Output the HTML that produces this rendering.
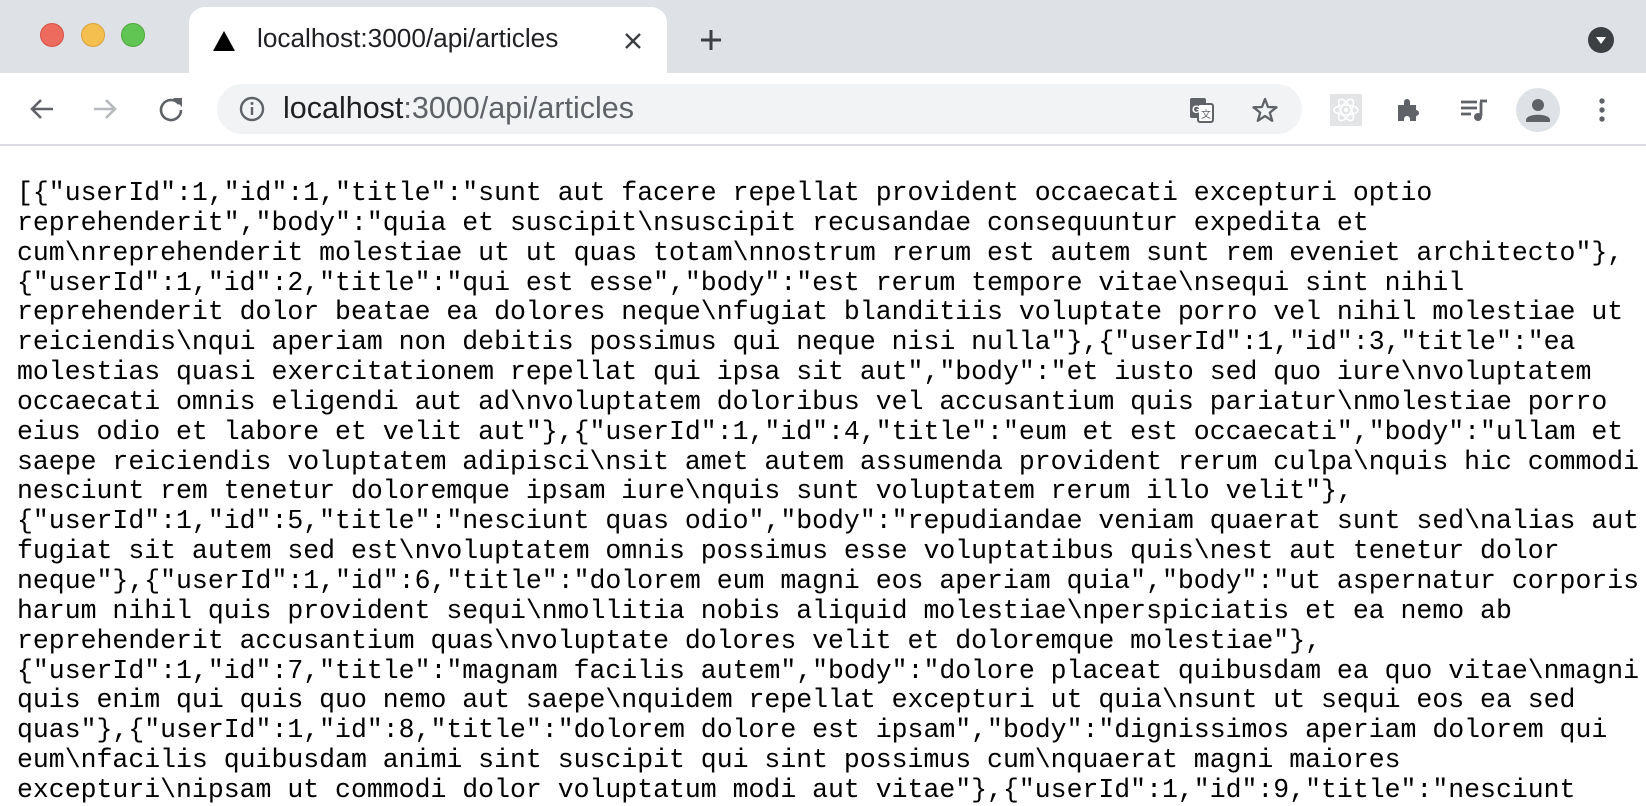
<!DOCTYPE html>
<html><head><meta charset="utf-8"><style>
*{margin:0;padding:0;box-sizing:border-box}
body{width:1646px;height:784px;overflow:hidden;background:#fff;position:relative;font-family:"Liberation Sans",sans-serif}
.tabbar{position:absolute;left:0;top:0;width:1646px;height:73px;background:#dee1e6}
.dot{position:absolute;width:24px;height:24px;border-radius:50%;top:23px}
.tab{position:absolute;left:189px;top:7px;width:478px;height:70px;background:#fff;border-radius:16px 16px 0 0}
.tabtitle{position:absolute;left:257px;top:23px;font-size:26.2px;color:#202124}
.toolbar{position:absolute;left:0;top:73px;width:1646px;height:73px;background:#fff;border-bottom:2px solid #dadce0}
.omni{position:absolute;left:217px;top:84px;width:1085px;height:50px;background:#f1f3f4;border-radius:25px}
.url{position:absolute;left:283px;top:91px;font-size:30.5px;color:#202124}
.url span{color:#5f6368}
pre{position:absolute;left:17px;top:179px;font-family:"Liberation Mono",monospace;font-size:26.5px;line-height:29.85px;color:#000;white-space:pre}
svg{position:absolute}
</style></head><body>
<div class="tabbar"></div>
<div class="dot" style="left:40px;background:#ed6a5e;border:1px solid #d75247"></div>
<div class="dot" style="left:81px;background:#f5bf4f;border:1px solid #d9a23c"></div>
<div class="dot" style="left:121px;background:#61c554;border:1px solid #4ea73f"></div>
<div class="tab"></div>
<svg style="left:212px;top:30px" width="24" height="22" viewBox="0 0 24 22"><path d="M12 1 L23 21 L1 21Z" fill="#000"/></svg>
<div class="tabtitle">localhost:3000/api/articles</div>
<svg style="left:622px;top:30px" width="22" height="22" viewBox="0 0 22 22"><path d="M4 4L18 18M18 4L4 18" stroke="#3c4043" stroke-width="2.4"/></svg>
<svg style="left:698px;top:27px" width="26" height="26" viewBox="0 0 26 26"><path d="M13 3V23M3 13H23" stroke="#3c4043" stroke-width="3"/></svg>
<svg style="left:1588px;top:27px" width="26" height="26" viewBox="0 0 26 26"><circle cx="13" cy="13" r="13" fill="#3c4043"/><path d="M8 10H18L13 17Z" fill="#fff"/></svg>
<div class="toolbar"></div>
<svg style="left:28px;top:95px" width="28" height="28" viewBox="0 0 28 28"><path d="M25 14H5M13 5L4 14L13 23" stroke="#5f6368" stroke-width="2.6" fill="none"/></svg>
<svg style="left:91px;top:95px" width="28" height="28" viewBox="0 0 28 28"><path d="M3 14H23M15 5L24 14L15 23" stroke="#b5b8bc" stroke-width="2.6" fill="none"/></svg>
<svg style="left:157px;top:95px" width="28" height="28" viewBox="0 0 28 28"><path d="M22 9A10 10 0 1 0 24 15" stroke="#5f6368" stroke-width="2.6" fill="none"/><path d="M16 3H25V12Z" fill="#5f6368"/></svg>
<div class="omni"></div>
<svg style="left:239px;top:96px" width="26" height="26" viewBox="0 0 26 26"><circle cx="13" cy="13" r="11" stroke="#5f6368" stroke-width="2.4" fill="none"/><path d="M13 11V19" stroke="#5f6368" stroke-width="2.4"/><circle cx="13" cy="7.5" r="1.5" fill="#5f6368"/></svg>
<div class="url">localhost<span>:3000/api/articles</span></div>
<svg style="left:1188px;top:96px" width="28" height="28" viewBox="0 0 28 28"><rect x="2" y="2" width="16" height="20" rx="2" fill="#5f6368"/><rect x="10" y="8" width="15" height="18" rx="2" fill="#fff" stroke="#5f6368" stroke-width="2"/><text x="4" y="17" font-size="11" font-weight="bold" fill="#fff" font-family="Liberation Sans">G</text><text x="13" y="22" font-size="10" fill="#5f6368" font-family="Liberation Sans, Noto Sans CJK SC, sans-serif">文</text></svg>
<svg style="left:1251px;top:96px" width="28" height="28" viewBox="0 0 28 28"><path d="M14 3L17 11L25.5 11.3L18.8 16.6L21.2 24.8L14 20L6.8 24.8L9.2 16.6L2.5 11.3L11 11Z" stroke="#5f6368" stroke-width="2.3" fill="none" stroke-linejoin="round"/></svg>
<div style="position:absolute;left:1330px;top:94px;width:32px;height:32px;background:#e3e4e6"></div>
<svg style="left:1330px;top:94px" width="32" height="32" viewBox="0 0 32 32"><g stroke="#fff" stroke-width="1.6" fill="none"><ellipse cx="16" cy="16" rx="12" ry="5"/><ellipse cx="16" cy="16" rx="12" ry="5" transform="rotate(60 16 16)"/><ellipse cx="16" cy="16" rx="12" ry="5" transform="rotate(-60 16 16)"/></g><circle cx="16" cy="16" r="2" fill="#fff"/></svg>
<svg style="left:1395px;top:96px" width="28" height="28" viewBox="0 0 28 28"><path d="M3 9H9V6A3 3 0 0 1 15 6V9H21V14A3 3 0 0 1 21 20V25H15V23A3 3 0 0 0 9 23V25H3Z" fill="#5f6368"/></svg>
<svg style="left:1459px;top:96px" width="30" height="28" viewBox="0 0 30 28"><path d="M2 6H18M2 12H18M2 18H12" stroke="#5f6368" stroke-width="2.8"/><path d="M22 6V20" stroke="#5f6368" stroke-width="2.8"/><path d="M21 5H28" stroke="#5f6368" stroke-width="2.8"/><circle cx="19" cy="21" r="4" fill="#5f6368"/></svg>
<svg style="left:1516px;top:88px" width="44" height="44" viewBox="0 0 44 44"><circle cx="22" cy="22" r="22" fill="#dee1e6"/><circle cx="22" cy="17" r="6" fill="#5f6368"/><path d="M10 32C10 25 34 25 34 32V34H10Z" fill="#5f6368"/></svg>
<svg style="left:1594px;top:96px" width="16" height="28" viewBox="0 0 16 28"><circle cx="8" cy="5" r="2.7" fill="#5f6368"/><circle cx="8" cy="14" r="2.7" fill="#5f6368"/><circle cx="8" cy="23" r="2.7" fill="#5f6368"/></svg>
<pre>[{"userId":1,"id":1,"title":"sunt aut facere repellat provident occaecati excepturi optio
reprehenderit","body":"quia et suscipit\nsuscipit recusandae consequuntur expedita et
cum\nreprehenderit molestiae ut ut quas totam\nnostrum rerum est autem sunt rem eveniet architecto"},
{"userId":1,"id":2,"title":"qui est esse","body":"est rerum tempore vitae\nsequi sint nihil
reprehenderit dolor beatae ea dolores neque\nfugiat blanditiis voluptate porro vel nihil molestiae ut
reiciendis\nqui aperiam non debitis possimus qui neque nisi nulla"},{"userId":1,"id":3,"title":"ea
molestias quasi exercitationem repellat qui ipsa sit aut","body":"et iusto sed quo iure\nvoluptatem
occaecati omnis eligendi aut ad\nvoluptatem doloribus vel accusantium quis pariatur\nmolestiae porro
eius odio et labore et velit aut"},{"userId":1,"id":4,"title":"eum et est occaecati","body":"ullam et
saepe reiciendis voluptatem adipisci\nsit amet autem assumenda provident rerum culpa\nquis hic commodi
nesciunt rem tenetur doloremque ipsam iure\nquis sunt voluptatem rerum illo velit"},
{"userId":1,"id":5,"title":"nesciunt quas odio","body":"repudiandae veniam quaerat sunt sed\nalias aut
fugiat sit autem sed est\nvoluptatem omnis possimus esse voluptatibus quis\nest aut tenetur dolor
neque"},{"userId":1,"id":6,"title":"dolorem eum magni eos aperiam quia","body":"ut aspernatur corporis
harum nihil quis provident sequi\nmollitia nobis aliquid molestiae\nperspiciatis et ea nemo ab
reprehenderit accusantium quas\nvoluptate dolores velit et doloremque molestiae"},
{"userId":1,"id":7,"title":"magnam facilis autem","body":"dolore placeat quibusdam ea quo vitae\nmagni
quis enim qui quis quo nemo aut saepe\nquidem repellat excepturi ut quia\nsunt ut sequi eos ea sed
quas"},{"userId":1,"id":8,"title":"dolorem dolore est ipsam","body":"dignissimos aperiam dolorem qui
eum\nfacilis quibusdam animi sint suscipit qui sint possimus cum\nquaerat magni maiores
excepturi\nipsam ut commodi dolor voluptatum modi aut vitae"},{"userId":1,"id":9,"title":"nesciunt</pre>
</body></html>
